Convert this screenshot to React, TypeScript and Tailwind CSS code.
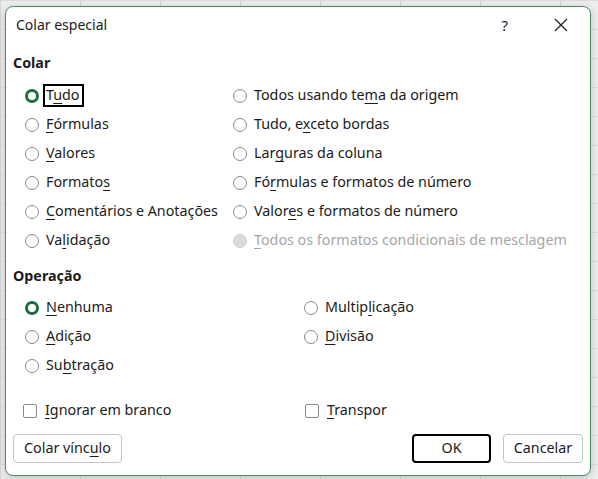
import React from "react";

const font = { fontFamily: '"Noto Sans", "Open Sans", sans-serif' };

function Radio({ checked, disabled }: { checked?: boolean; disabled?: boolean }) {
  if (checked)
    return <span className="block w-[14px] h-[14px] rounded-full border-[3.5px] border-[#1f6b43] bg-white shrink-0" />;
  if (disabled)
    return <span className="block w-[14px] h-[14px] rounded-full border border-[#cfcfcf] bg-[#dcdcdc] shrink-0" />;
  return <span className="block w-[14px] h-[14px] rounded-full border border-[#8a8a8a] bg-white shrink-0" />;
}

function Label({ text, u, disabled }: { text: string; u: number; disabled?: boolean }) {
  return (
    <span className={disabled ? "text-[#a6a6a6]" : "text-[#1b1b1b]"}>
      {text.slice(0, u)}
      <span className="underline underline-offset-[3px] decoration-1">{text.slice(u, u + 1)}</span>
      {text.slice(u + 1)}
    </span>
  );
}

function RadioRow({ text, u, checked, disabled, focus }: { text: string; u: number; checked?: boolean; disabled?: boolean; focus?: boolean }) {
  return (
    <div className="h-[29px] flex items-center gap-[7px]">
      <Radio checked={checked} disabled={disabled} />
      {focus ? (
        <span className="border-2 border-black pl-[1px] pr-[2px] h-[23px] flex items-center -ml-[3px]">
          <Label text={text} u={u} disabled={disabled} />
        </span>
      ) : (
        <Label text={text} u={u} disabled={disabled} />
      )}
    </div>
  );
}

function Check({ text, u }: { text: string; u: number }) {
  return (
    <div className="h-[29px] flex items-center gap-[8px]">
      <span className="block w-[14px] h-[14px] rounded-[2px] border border-[#8a8a8a] bg-white" />
      <Label text={text} u={u} />
    </div>
  );
}

export default function App() {
  return (
    <div
      className="w-[598px] h-[479px] overflow-hidden bg-[#ededed] bg-[linear-gradient(to_right,#d6d6d6_1px,transparent_1px),linear-gradient(to_bottom,#dcdcdc_1px,transparent_1px)] bg-[size:80px_29px] pt-[6px] pl-[5px]"
      style={font}
    >
      <div className="w-[586px] h-[470px] bg-white border border-[#4d8a63] rounded-[8px] shadow-[0_2px_8px_rgba(0,0,0,0.18)] flex flex-col text-[14.3px] leading-none">
        <div className="h-[36px] flex items-center pl-[10px] pr-[22px] text-[#1b1b1b]">
          <span className="text-[14px]">Colar especial</span>
          <span className="ml-auto text-[15px] mr-[46px]">?</span>
          <svg width="14" height="14" viewBox="0 0 14 14" className="text-[#222]">
            <path d="M1 1 L13 13 M13 1 L1 13" stroke="currentColor" strokeWidth="1.3" fill="none" />
          </svg>
        </div>
        <div className="mt-[10px] h-[20px] flex items-center pl-[7px] font-bold text-[#1b1b1b]">Colar</div>
        <div className="mt-[8px] pl-[19px] grid grid-cols-[208px_1fr]">
          <div className="flex flex-col">
            <RadioRow text="Tudo" u={1} checked focus />
            <RadioRow text="Fórmulas" u={0} />
            <RadioRow text="Valores" u={0} />
            <RadioRow text="Formatos" u={7} />
            <RadioRow text="Comentários e Anotações" u={0} />
            <RadioRow text="Validação" u={2} />
          </div>
          <div className="flex flex-col">
            <RadioRow text="Todos usando tema da origem" u={15} />
            <RadioRow text="Tudo, exceto bordas" u={7} />
            <RadioRow text="Larguras da coluna" u={3} />
            <RadioRow text="Fórmulas e formatos de número" u={2} />
            <RadioRow text="Valores e formatos de número" u={5} />
            <RadioRow text="Todos os formatos condicionais de mesclagem" u={0} disabled />
          </div>
        </div>
        <div className="mt-[11px] h-[20px] flex items-center pl-[7px] font-bold text-[#1b1b1b]">Operação</div>
        <div className="mt-[7px] pl-[19px] grid grid-cols-[279px_1fr]">
          <div className="flex flex-col">
            <RadioRow text="Nenhuma" u={0} checked />
            <RadioRow text="Adição" u={0} />
            <RadioRow text="Subtração" u={2} />
          </div>
          <div className="flex flex-col">
            <RadioRow text="Multiplicação" u={6} />
            <RadioRow text="Divisão" u={0} />
          </div>
        </div>
        <div className="mt-[16px] pl-[17px] grid grid-cols-[282px_1fr]">
          <Check text="Ignorar em branco" u={0} />
          <Check text="Transpor" u={0} />
        </div>
        <div className="mt-[9px] px-[7px] flex items-center">
          <button className="h-[29px] w-[109px] rounded-[4px] border border-[#c4c4c4] bg-white text-[#1b1b1b] text-[14.3px]">
            Colar vínc<span className="underline underline-offset-[3px]">u</span>lo
          </button>
          <button className="ml-auto h-[29px] w-[79px] rounded-[4px] border-2 border-black bg-white text-[#1b1b1b] text-[14.3px]">
            OK
          </button>
          <button className="ml-[12px] h-[29px] w-[80px] rounded-[4px] border border-[#c4c4c4] bg-white text-[#1b1b1b] text-[14.3px]">
            Cancelar
          </button>
        </div>
      </div>
    </div>
  );
}
